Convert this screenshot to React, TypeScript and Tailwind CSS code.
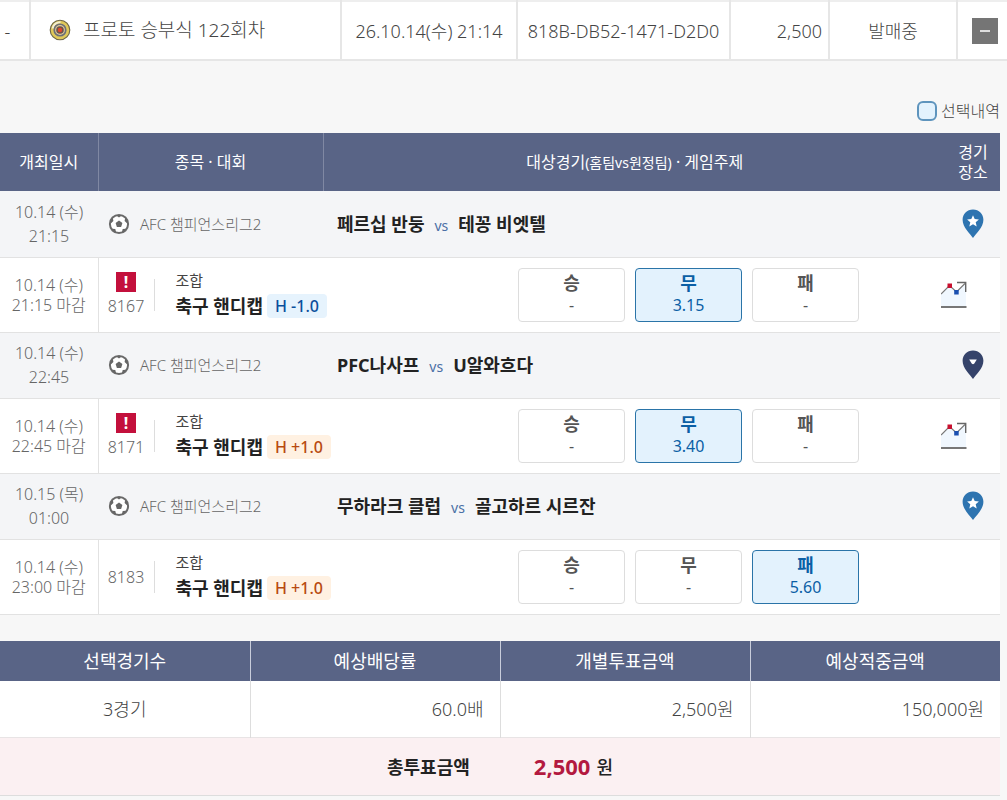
import { useState } from "react";

interface Game {
  id: string;
  date: string;
  time: string;
  home: string;
  away: string;
  pin: "star" | "down";
  closeDate: string;
  closeTime: string;
  single: boolean;
  handicap: string;
  odds: string[];
  pick: number;
}

const games: Game[] = [
  {
    id: "8167",
    date: "10.14 (수)",
    time: "21:15",
    home: "페르십 반둥",
    away: "테꽁 비엣텔",
    pin: "star",
    closeDate: "10.14 (수)",
    closeTime: "21:15 마감",
    single: true,
    handicap: "H -1.0",
    odds: ["-", "3.15", "-"],
    pick: 1,
  },
  {
    id: "8171",
    date: "10.14 (수)",
    time: "22:45",
    home: "PFC나사프",
    away: "U알와흐다",
    pin: "down",
    closeDate: "10.14 (수)",
    closeTime: "22:45 마감",
    single: true,
    handicap: "H +1.0",
    odds: ["-", "3.40", "-"],
    pick: 1,
  },
  {
    id: "8183",
    date: "10.15 (목)",
    time: "01:00",
    home: "무하라크 클럽",
    away: "골고하르 시르잔",
    pin: "star",
    closeDate: "10.14 (수)",
    closeTime: "23:00 마감",
    single: false,
    handicap: "H +1.0",
    odds: ["-", "-", "5.60"],
    pick: 2,
  },
];

const outcomes = ["승", "무", "패"];

const summary = [
  { label: "선택경기수", value: "3경기", align: "text-center" },
  { label: "예상배당률", value: "60.0배", align: "text-right" },
  { label: "개별투표금액", value: "2,500원", align: "text-right" },
  { label: "예상적중금액", value: "150,000원", align: "text-right" },
];

function TargetIcon() {
  return (
    <svg width="22" height="22" viewBox="0 0 22 22" className="shrink-0">
      <circle cx="11" cy="11" r="9.8" fill="#e0c95a" stroke="#6b6448" strokeWidth="1.1" />
      <path d="M3.500 9.500A7.800 7.800 0 0 1 11.500 3.200" fill="none" stroke="#f3eed2" strokeWidth="2" />
      <circle cx="11" cy="11" r="6.6" fill="#6d6f78" />
      <circle cx="11" cy="11" r="4.9" fill="#dccb9a" />
      <circle cx="11" cy="11" r="3.8" fill="#6e5247" />
      <circle cx="11" cy="11" r="2.2" fill="#e2452a" />
    </svg>
  );
}

function BallIcon() {
  return (
    <svg width="22" height="22" viewBox="0 0 22 22" className="shrink-0">
      <circle cx="11" cy="11" r="9.1" fill="#fff" stroke="#6a6a6a" strokeWidth="2" />
      <path d="M11 7.600l3.400 2.500-1.300 3.900H8.900L7.600 10.100z" fill="#666" />
      <path
        d="M7.800 2h6.400L11 4.400zM2 8.400l2.800-3.600.6 3.300-2.400 2.200zM20 8.400l-2.800-3.600-.6 3.300 2.400 2.200zM4 15.800l3.300.2.800 3.300-2.400-.8zM18 15.800l-3.300.2-.8 3.300 2.400-.8z"
        fill="#666"
      />
    </svg>
  );
}

function PinIcon({ type }: { type: "star" | "down" }) {
  return (
    <svg width="22" height="30" viewBox="0 0 22 30">
      <path
        d="M11 .5C5 .5.6 5 .6 10.8.6 18.400 8 24.600 11 29c3-4.400 10.400-10.600 10.400-18.200C21.400 5 17 .5 11 .5z"
        fill={type === "star" ? "#2e74b0" : "#35436a"}
      />
      {type === "star" ? (
        <path d="M11 6.200l1.700 3.900 4.200.4-3.200 2.800 1 4.200-3.700-2.200-3.700 2.200 1-4.200-3.200-2.800 4.200-.4z" fill="#fff" />
      ) : (
        <path d="M7.200 9.600h7.600L12.300 13.600q-1.300 1.200-2.600 0z" fill="#fff" />
      )}
    </svg>
  );
}

function ChartIcon() {
  return (
    <svg width="26" height="28" viewBox="0 0 26 28">
      <path d="M0 13L8.500 4.500 15.500 11 25 2.500V25H0z" fill="#f0f7fe" />
      <path d="M0 13L8.500 4.500 15.500 11 24 2.500" fill="none" stroke="#777" strokeWidth="1.200" />
      <path d="M16 1.500h8.700V11" fill="none" stroke="#666" strokeWidth="1.400" />
      <path d="M0 26h25.500" stroke="#777" strokeWidth="2" />
      <rect x="6.500" y="2.500" width="4.500" height="4.500" fill="#c8102e" />
      <rect x="13.200" y="9" width="4.500" height="4.500" fill="#1a4fb0" />
    </svg>
  );
}

function GameRows({ game }: { game: Game }) {
  const [pick, setPick] = useState(game.pick);
  const plus = game.handicap.includes("+");

  return (
    <>
      <tr className="h-[66px] border-b border-[#e2e2e2] bg-[#f4f5f7]">
        <td className="text-center text-base leading-6 text-[#666]">
          {game.date}
          <br />
          {game.time}
        </td>
        <td>
          <div className="flex items-center gap-2.5 pl-2.5 text-[15px] text-[#666]">
            <BallIcon />
            <span className="whitespace-nowrap">AFC 챔피언스리그2</span>
          </div>
        </td>
        <td className="pl-3.5 text-lg font-bold text-[#222]">
          {game.home}
          <span className="mx-2.5 text-sm font-normal text-[#4a6fa5]">vs</span>
          {game.away}
        </td>
        <td>
          <button type="button" aria-label="경기장소" className="mx-auto block">
            <PinIcon type={game.pin} />
          </button>
        </td>
      </tr>
      <tr className="h-[75px] border-b border-[#e2e2e2] bg-white">
        <td className="border-r border-[#e2e2e2] text-center text-base leading-5 text-[#666]">
          {game.closeDate}
          <br />
          {game.closeTime}
        </td>
        <td colSpan={3}>
          <div className="flex items-center">
            <div className="flex w-[55px] shrink-0 flex-col items-center gap-0.5 text-base leading-6 text-[#666]">
              {game.single && (
                <span className="flex size-5 items-center justify-center bg-[#c3103c] font-bold text-white">!</span>
              )}
              {game.id}
            </div>
            <div className="h-8 w-px bg-[#ddd]" />
            <div className="ml-[21px] flex flex-1 flex-col gap-0.5 pb-1 whitespace-nowrap">
              <p className="text-[15px] leading-6 font-normal text-[#444]">조합</p>
              <p className="flex items-center gap-1 text-lg leading-6 font-bold text-[#222]">
                축구 핸디캡
                <span
                  className={`rounded-sm px-2 text-base leading-6 font-medium ${
                    plus ? "bg-[#fff1e2] text-[#b84a10]" : "bg-[#e6f3fd] text-[#0b4f9c]"
                  }`}
                >
                  {game.handicap}
                </span>
              </p>
            </div>
            <div className="flex gap-2.5">
              {outcomes.map((label, i) => (
                <button
                  key={label}
                  type="button"
                  onClick={() => setPick(i)}
                  className={`flex h-[54px] w-[107px] flex-col items-center rounded border pt-0.5 text-base leading-5 font-normal ${
                    pick === i
                      ? "border-[#2a74a8] bg-[#e3f2fd] text-[#0b5fa5]"
                      : "border-[#ddd] bg-white text-[#555]"
                  }`}
                >
                  <span className="text-lg leading-6 font-bold">{label}</span>
                  <span>{game.odds[i]}</span>
                </button>
              ))}
            </div>
            <div className="w-[141px] shrink-0 pl-[82px]">
              {game.single && (
                <button type="button" aria-label="배당률 변동" className="block">
                  <ChartIcon />
                </button>
              )}
            </div>
          </div>
        </td>
      </tr>
    </>
  );
}

export default function App() {
  const [open, setOpen] = useState(true);

  return (
    <div className="min-h-screen bg-[#f7f7f7] font-['Noto_Sans','Noto_Sans_CJK_KR',sans-serif] font-light">
      <table className="w-full table-fixed border-y-2 border-t-[#eee] border-b-[#e6e6e6] bg-white text-lg text-[#444]">
        <tbody>
          <tr className="h-[59px] divide-x-2 divide-[#e6e6e6]">
            <td className="w-[30px] pr-3.5 text-center">-</td>
            <td className="pl-[18px]">
              <div className="flex items-center gap-3 text-[19px] whitespace-nowrap">
                <TargetIcon />
                프로토 승부식 122회차
              </div>
            </td>
            <td className="w-[176px] text-center whitespace-nowrap">26.10.14(수) 21:14</td>
            <td className="w-[213px] text-center whitespace-nowrap">818B-DB52-1471-D2D0</td>
            <td className="w-[99px] pr-1.5 text-right">2,500</td>
            <td className="w-32 text-center">발매중</td>
            <td className="w-[50px]">
              <button
                type="button"
                aria-label={open ? "접기" : "펼치기"}
                onClick={() => setOpen(!open)}
                className="ml-3.5 flex size-[26px] items-center justify-center bg-[#757575]"
              >
                <span className="h-0.5 w-2.5 bg-[#ddd]" />
              </button>
            </td>
          </tr>
        </tbody>
      </table>

      {open && (
        <main className="pr-[7px]">
          <div className="flex h-[72px] items-end justify-end pb-2.5">
            <label className="flex items-center gap-1 text-base leading-6 text-[#444]">
              <input
                type="checkbox"
                className="size-5 appearance-none rounded-md border-2 border-[#5e94bd] bg-[#e3f2fd] checked:bg-[#2a74a8]"
              />
              선택내역
            </label>
          </div>

          <table className="w-full table-fixed border-collapse">
            <thead>
              <tr className="h-[58px] bg-[#596486] text-base leading-5 text-white">
                <th className="w-[98px] border-r border-[#8088a3] font-normal">개최일시</th>
                <th className="w-[225px] border-r border-[#8088a3] font-normal">종목 · 대회</th>
                <th className="font-normal">
                  대상경기<span className="text-sm">(홈팀vs원정팀)</span> · 게임주제
                </th>
                <th className="w-[54px] font-normal">
                  경기
                  <br />
                  장소
                </th>
              </tr>
            </thead>
            <tbody>
              {games.map((game) => (
                <GameRows key={game.id} game={game} />
              ))}
            </tbody>
          </table>

          <table className="mt-[26px] w-full table-fixed border-collapse border-b border-[#ddd] text-lg text-[#444]">
            <thead>
              <tr className="h-10 divide-x divide-[#c9cddb] bg-[#596486] text-white">
                {summary.map((item) => (
                  <th key={item.label} className="font-normal">
                    {item.label}
                  </th>
                ))}
              </tr>
            </thead>
            <tbody>
              <tr className="h-[57px] divide-x divide-[#ddd] border-b border-[#e8e4e5] bg-white">
                {summary.map((item) => (
                  <td key={item.label} className={`px-4 ${item.align}`}>
                    {item.value}
                  </td>
                ))}
              </tr>
            </tbody>
            <tfoot>
              <tr className="h-[58px] bg-[#fbf0f2] font-bold text-[#222]">
                <td colSpan={4}>
                  <div className="flex items-center justify-center">
                    총투표금액
                    <span className="mr-1.5 ml-16 text-[22px] text-[#b3193f]">2,500</span>
                    <span className="font-medium">원</span>
                  </div>
                </td>
              </tr>
            </tfoot>
          </table>
        </main>
      )}
    </div>
  );
}
